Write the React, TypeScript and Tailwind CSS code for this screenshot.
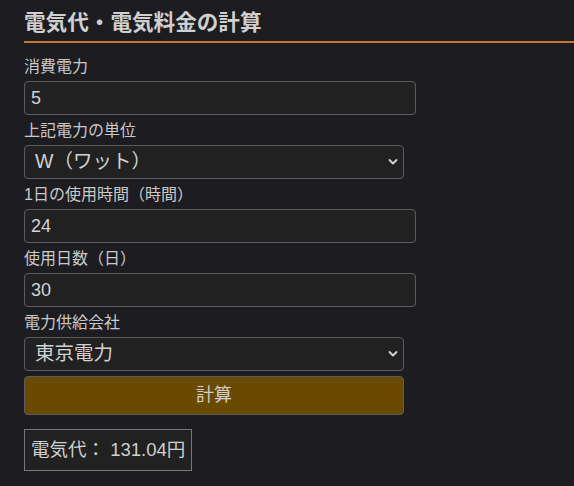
import React from "react";

const font = { fontFamily: '"Liberation Sans", "Noto Sans CJK JP", sans-serif' };

function Chevron() {
  return (
    <svg className="pointer-events-none absolute right-[6px] top-1/2 -translate-y-1/2" width="10" height="7" viewBox="0 0 10 7" fill="none">
      <path d="M1.5 1.5 L5 5 L8.5 1.5" stroke="#d0d0d0" strokeWidth="2" strokeLinecap="round" strokeLinejoin="round" />
    </svg>
  );
}

function Label({ children }: { children: React.ReactNode }) {
  return <div className="mt-[4px] mb-[2px] text-[16px] leading-[24px] text-[#c9c9c9]">{children}</div>;
}

function Input({ value }: { value: string }) {
  return (
    <input
      defaultValue={value}
      className="block h-[34px] w-[392px] rounded-[4px] border border-[#5c5c5c] bg-[#212121] px-[6px] text-[18px] text-[#d2d2d2] outline-none"
      style={font}
    />
  );
}

function Select({ options }: { options: string[] }) {
  return (
    <div className="relative w-[380px]">
      <select
        className="block h-[34px] w-full appearance-none rounded-[4px] border border-[#5c5c5c] bg-[#212121] pl-[10px] pr-[24px] text-[19.5px] text-[#d2d2d2] outline-none"
        style={font}
      >
        {options.map((o) => (
          <option key={o}>{o}</option>
        ))}
      </select>
      <Chevron />
    </div>
  );
}

export default function App() {
  return (
    <div className="min-h-[486px] w-full bg-[#1d1c21] pl-[24px]" style={font}>
      <h2 className="border-b-2 border-[#c8782c] pt-[8px] pb-[3px] text-[21.6px] font-bold leading-[30px] text-[#cfcfcf]">
        電気代・電気料金の計算
      </h2>
      <div className="h-[8px]" />
      <Label>消費電力</Label>
      <Input value="5" />
      <Label>上記電力の単位</Label>
      <Select options={["W（ワット）", "kW（キロワット）"]} />
      <Label>1日の使用時間（時間）</Label>
      <Input value="24" />
      <Label>使用日数（日）</Label>
      <Input value="30" />
      <Label>電力供給会社</Label>
      <Select options={["東京電力", "関西電力"]} />
      <button
        className="mt-[5px] block h-[39px] w-[380px] rounded-[4px] border border-[#5c5c5c] bg-[#6a4a00] text-[18px] text-[#d0d0d0]"
        style={font}
      >
        計算
      </button>
      <div className="mt-[14px] inline-block border border-[#777777] bg-[#212121] px-[6px] py-[8px] text-[18.5px] leading-[24px] text-[#d0d0d0]">
        電気代： 131.04円
      </div>
    </div>
  );
}
